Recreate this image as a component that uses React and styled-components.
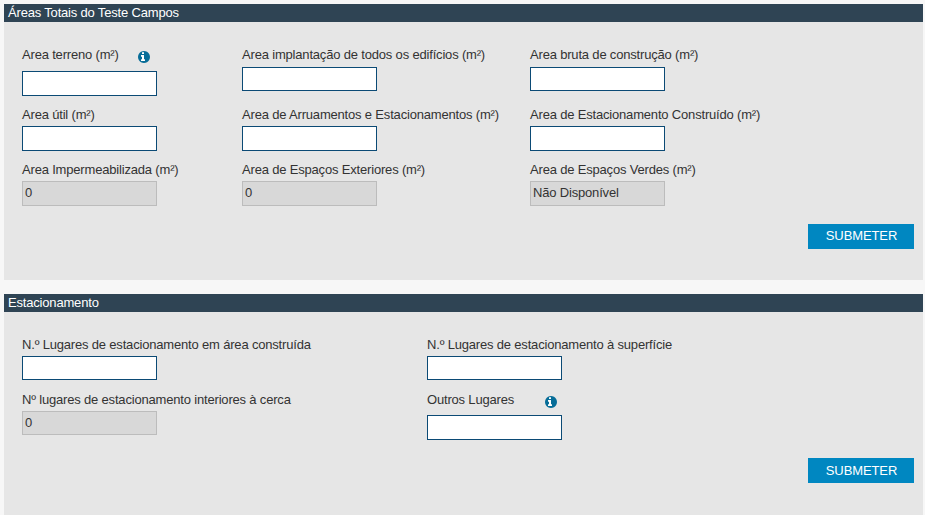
import React from "react";
import styled, { createGlobalStyle } from "styled-components";

const GlobalStyle = createGlobalStyle`
  * { box-sizing: border-box; }
  body {
    margin: 0;
    background: #f7f7f7;
    color: #333;
    font-family: "Liberation Sans", Arial, sans-serif;
    font-size: 13px;
    letter-spacing: -0.18px;
    overflow: hidden;
  }
`;

const Page = styled.main`
  display: flex;
  flex-direction: column;
  gap: 14px;
  height: 515px;
  padding: 4px 2px 0 4px;
  overflow: hidden;
`;

const Panel = styled.section`
  display: flex;
  flex-direction: column;
  flex: none;
  height: 276px;
  background: #e6e6e6;
`;

const PanelTitle = styled.h2`
  height: 18px;
  margin: 0;
  padding-left: 4px;
  background: #2f4454;
  color: #fff;
  font-size: 13px;
  font-weight: 400;
  line-height: 18px;
`;

const Fields = styled.div`
  display: grid;
  grid-template-columns: ${(p) => p.$columns};
  grid-template-rows: ${(p) => p.$rows};
  padding: 25px 18px 0;
`;

const Field = styled.div`
  display: flex;
  flex-direction: column;
  align-items: flex-start;
`;

const LabelRow = styled.div`
  display: flex;
  height: ${(p) => p.$height}px;
  white-space: nowrap;
`;

const Label = styled.label`
  min-width: ${(p) => p.$width || 0}px;
  line-height: 16px;
`;

const InfoIcon = styled.svg`
  display: block;
  width: 12px;
  height: 12px;
  margin-top: 4px;
  fill: #076d98;
`;

const IconBacking = styled.circle`
  fill: #fff;
`;

const Input = styled.input`
  width: 135px;
  height: ${(p) => p.$height}px;
  margin: 0;
  padding: 0 2px 2px;
  border: 1px solid #0b4a75;
  border-radius: 0;
  background: #fff;
  color: #333;
  font: inherit;
  letter-spacing: inherit;

  &:disabled {
    border-color: #bcbcbc;
    background: #d8d8d8;
    color: #333;
  }
`;

const Actions = styled.div`
  display: flex;
  justify-content: flex-end;
  padding-right: 9px;
`;

const SubmitButton = styled.button`
  width: 106px;
  height: 25px;
  padding: 0 0 ${(p) => p.$bottom}px 1px;
  border: 0;
  background: #0087c1;
  color: #fff;
  font: inherit;
  letter-spacing: -0.1px;
`;

const areaFields = [
  { label: "Area terreno (m²)", info: 116, labelHeight: 24, height: 25 },
  { label: "Area implantação de todos os edifícios (m²)", labelHeight: 20, height: 24 },
  { label: "Area bruta de construção (m²)", labelHeight: 20, height: 24 },
  { label: "Area útil (m²)" },
  { label: "Area de Arruamentos e Estacionamentos (m²)" },
  { label: "Area de Estacionamento Construído (m²)" },
  { label: "Area Impermeabilizada (m²)", value: "0" },
  { label: "Area de Espaços Exteriores (m²)", value: "0" },
  { label: "Area de Espaços Verdes (m²)", value: "Não Disponível" },
];

const parkingFields = [
  { label: "N.º Lugares de estacionamento em área construída", height: 24 },
  { label: "N.º Lugares de estacionamento à superfície", height: 24 },
  { label: "Nº lugares de estacionamento interiores à cerca", value: "0", height: 24 },
  { label: "Outros Lugares", info: 118, labelHeight: 23 },
];

function Info() {
  return (
    <InfoIcon viewBox="128 128 1536 1536" role="img" aria-label="Informação">
      <IconBacking cx="896" cy="896" r="700" />
      <path d="M1024 1376v-160q0-14-9-23t-23-9h-96v-512q0-14-9-23t-23-9h-320q-14 0-23 9t-9 23v160q0 14 9 23t23 9h96v320h-96q-14 0-23 9t-9 23v160q0 14 9 23t23 9h448q14 0 23-9t9-23zM896 480v-160q0-14-9-23t-23-9h-192q-14 0-23 9t-9 23v160q0 14 9 23t23 9h192q14 0 23-9t9-23zM1664 896q0 209-103 385.5t-279.5 279.5-385.5 103-385.5-103-279.5-279.5-103-385.5 103-385.5 279.5-279.5 385.5-103 385.5 103 279.5 279.5 103 385.5z" />
    </InfoIcon>
  );
}

function FormPanel({ title, fields, columns, rows, buttonBottom }) {
  return (
    <Panel>
      <PanelTitle>{title}</PanelTitle>
      <Fields $columns={columns} $rows={rows}>
        {fields.map(({ label, info, value, labelHeight = 19, height = 25 }) => (
          <Field key={label}>
            <LabelRow $height={labelHeight}>
              <Label htmlFor={label} $width={info}>
                {label}
              </Label>
              {info !== undefined && <Info />}
            </LabelRow>
            <Input
              id={label}
              $height={height}
              defaultValue={value}
              disabled={value !== undefined}
            />
          </Field>
        ))}
      </Fields>
      <Actions>
        <SubmitButton $bottom={buttonBottom}>SUBMETER</SubmitButton>
      </Actions>
    </Panel>
  );
}

export default function App() {
  return (
    <>
      <GlobalStyle />
      <Page>
        <FormPanel
          title="Áreas Totais do Teste Campos"
          fields={areaFields}
          columns="220px 288px 1fr"
          rows="60px 55px 62px"
          buttonBottom={2}
        />
        <FormPanel
          title="Estacionamento"
          fields={parkingFields}
          columns="405px 1fr"
          rows="55px 66px"
          buttonBottom={0}
        />
      </Page>
    </>
  );
}
